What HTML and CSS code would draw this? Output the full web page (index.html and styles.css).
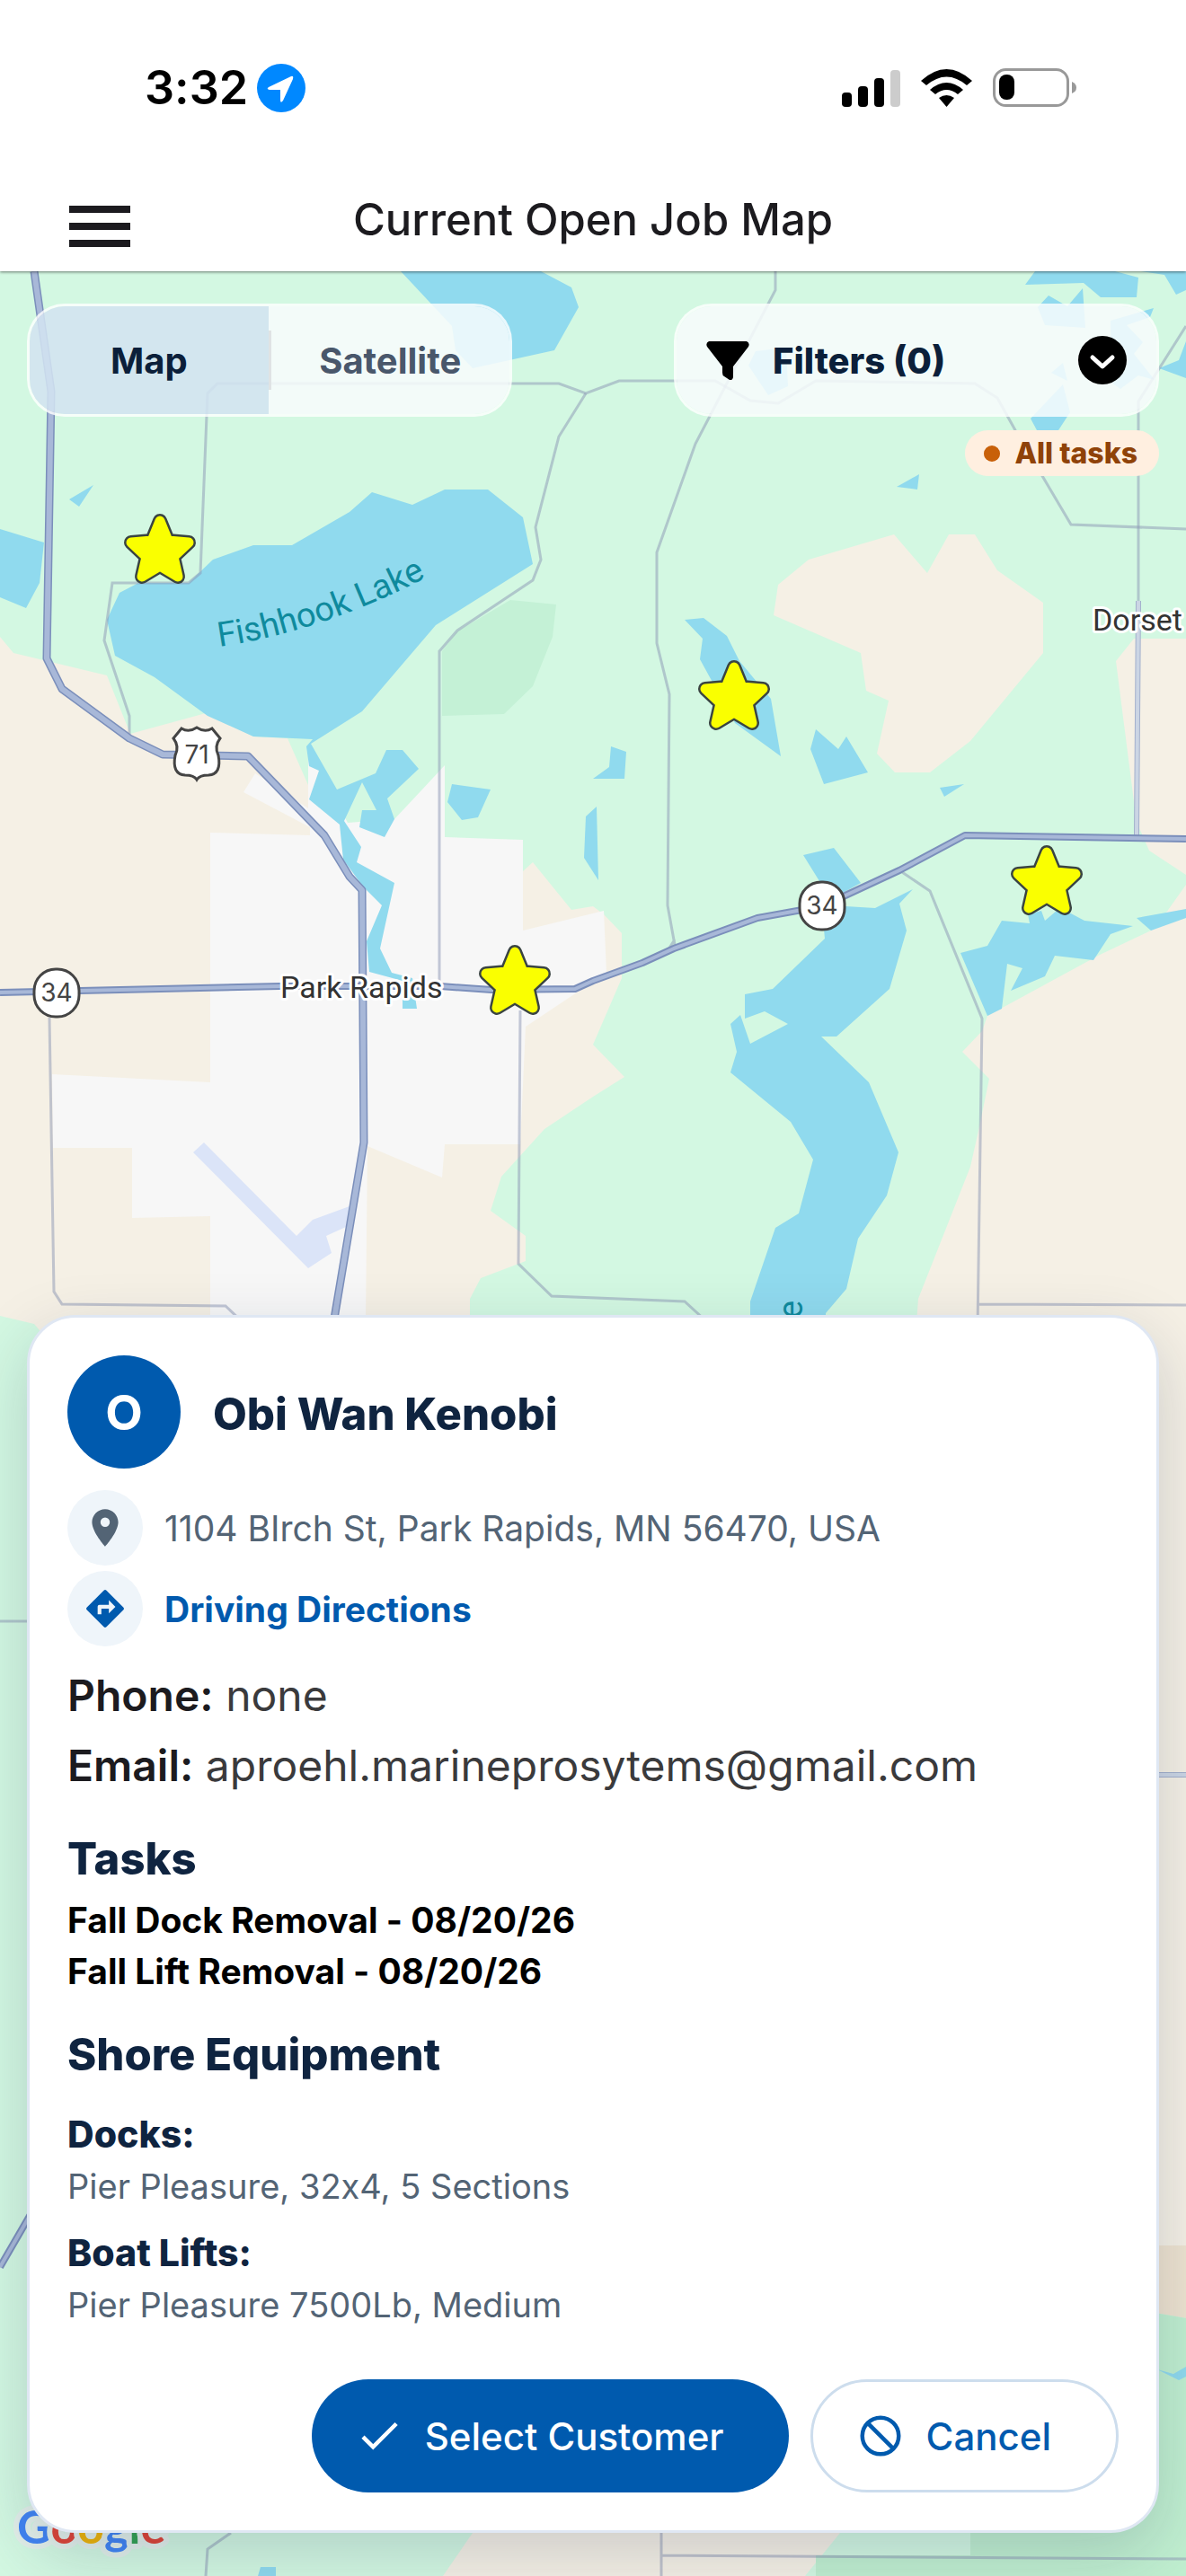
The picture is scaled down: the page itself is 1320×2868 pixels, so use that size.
FILE: index.html
```html
<!DOCTYPE html>
<html lang="en">
<head>
  <meta charset="UTF-8" />
  <meta name="viewport" content="width=device-width, initial-scale=1.0"/>
  <title>Current Open Job Map</title>
  <link rel="stylesheet" href="styles.css">
</head>
<body>
  <header class="top">
    <div class="status-bar">
      <div class="clock">
        <span>3:32</span>
        <svg width="54" height="54" viewBox="0 0 54 54" aria-hidden="true">
          <circle cx="27" cy="27" r="27" fill="#0088ff"/>
          <path d="M38 14 Q41 13 40 17 L29 41 Q26 45 26 40 V29 H14 Q10 28 13 26 Z" fill="#fff"/>
        </svg>
      </div>
      <div class="indicators">
        <svg width="65" height="42" viewBox="0 0 65 42" aria-hidden="true">
          <rect x="0" y="26" width="11" height="16" rx="4"/>
          <rect x="18" y="19" width="11" height="23" rx="4"/>
          <rect x="36" y="10" width="11" height="32" rx="4"/>
          <rect x="54" y="1" width="11" height="41" rx="4" fill="#ccc"/>
        </svg>
        <svg width="57" height="42" viewBox="0 0 57 42" aria-hidden="true">
          <path d="M0 13 Q28.500 -13 57 13 L51 18 Q28.500 -1 6 18 Z"/>
          <path d="M10 23 Q28.500 7 47 23 L41 28 Q28.500 18 16 28 Z"/>
          <path d="M20 32 Q28.500 26 37 32 L28.500 42 Z"/>
        </svg>
        <svg width="93" height="43" viewBox="0 0 93 43" aria-hidden="true">
          <rect x="1.500" y="1.500" width="82" height="40" rx="13" fill="none" stroke="#999" stroke-width="3"/>
          <rect x="7" y="7" width="17" height="28" rx="8"/>
          <path d="M88 15 Q93 17 93 21.500 Q93 26 88 28 Z" fill="#999"/>
        </svg>
      </div>
    </div>
    <nav class="nav">
      <button class="menu-btn" aria-label="Open menu">
        <svg width="68" height="46" viewBox="0 0 68 46"><path d="M0 4H68M0 23H68M0 42H68" stroke="#1c1b1f" stroke-width="8"/></svg>
      </button>
      <h1>Current Open Job Map</h1>
    </nav>
  </header>

  <main class="map">
    <svg class="map-canvas" viewBox="0 302 1320 2566" preserveAspectRatio="xMidYMid slice" aria-hidden="true">
      <defs>
        <g id="star">
          <path d="M0 8 L9 30 L32 32 L15 48 L20 70 L0 58 L-20 70 L-15 48 L-32 32 L-9 30 Z" fill="#3a4442" stroke="#3a4442" stroke-width="16" stroke-linejoin="round"/>
          <path d="M0 8 L9 30 L32 32 L15 48 L20 70 L0 58 L-20 70 L-15 48 L-32 32 L-9 30 Z" fill="#faff00" stroke="#faff00" stroke-width="11" stroke-linejoin="round"/>
        </g>
        <path id="lakeLine" d="M244 720 Q358 704 482 639"/>
      </defs>
      <rect y="302" width="1320" height="2566" fill="#d3f8e2"/>

      <!-- open land -->
      <g fill="#f5f0e5">
        <path d="M0 709 15 727 119 752 145 817 229 794 282 820 320 822 343 874 400 960 582 970 593 960 636 1013 660 1009 672 1018 692 1039 692 1089 660 1163 695 1199 660 1221 606 1257 558 1310 546 1348 585 1376 585 1404 535 1423 523 1446 523 1500 60 1500 38 1474 0 1465Z"/>
        <path d="M861 685 866 651 900 623 995 595 1032 638 1056 595 1085 595 1110 635 1161 671 1161 727 1080 825 1035 860 996 860 976 839 989 780 964 769 958 727Z"/>
        <path d="M1262 711H1320V974L1279 947 1268 922 1263 900 1242 736Z"/>
        <path d="M1320 985 1298 1016 1281 1036 1224 1063 1099 1131 1093 1148 1071 1171 1101 1201 1089 1259 1080 1299 1022 1446 1018 1500H1200V2500H1320Z"/>
        <path d="M526 2820H935L896 2868H493Z"/>
      </g>
      <path d="M1200 2500H1320V2581L1200 2560Z" fill="#eee3d0"/>
      <path d="M1200 2560 1320 2581V2868H908V2845H1080V2700H1200Z" fill="#c0efd0"/>
      <path d="M492 725 509 703 568 668 619 673 615 709 593 764 561 795 492 797Z" fill="#c4f1d6"/>
      <path d="M293 1464 297 1455 304 1464Z" fill="#d3f8e2"/>

      <!-- town -->
      <path d="M234 927 345 930 345 921 271 882 284 861 343 900V836L387 916 439 912 469 880 495 852V932L582 935V1036L672 1014 675 1083 585 1143 579 1274H495L492 1311 409 1276 407 1470H234V1354L147 1356V1278H59L58 1196 234 1205Z" fill="#f7f7f7"/>
      <path d="M227 1272 330 1376 348 1358 389 1343 385 1366 363 1376 369 1395 343 1412 215 1283Z" fill="#dbe4f8"/>

      <!-- water -->
      <g fill="#90daee">
        <path d="M119 690 133 660 154 649H210L237 623 282 607H325L389 570 414 548 459 562 495 545H543L582 576 593 628 485 696 403 792 346 828 375 879 418 861 430 835H448L466 856 431 889 439 912 428 932 400 921 403 902H419L403 871 383 914 402 943 397 960 439 983 423 1056 436 1083 459 1089 464 1123H448V1092L411 1082 408 1048 425 1008 404 987 382 957 378 918 344 890 355 858 344 853 341 831 348 823 282 820 231 797 172 754 128 730Z"/>
        <path d="M446 302 503 363 507 390 526 410 617 390 644 342 636 320 602 302Z"/>
        <path d="M0 589 49 604 44 649 29 677 0 665Z"/>
        <path d="M77 556 104 540 88 564Z"/>
        <path d="M503 873 546 879 532 910 514 913 498 893Z"/>
        <path d="M680 831 697 837 695 867H660L678 854Z"/>
        <path d="M652 909 664 898 666 980 650 955Z"/>
        <path d="M762 690 783 688 809 708 823 736 858 778 869 842 818 805 779 734 782 711Z"/>
        <path d="M908 812 933 834 942 820 966 860 917 873 902 834Z"/>
        <path d="M1046 877 1073 873 1051 887Z"/>
        <path d="M998 542 1023 528 1021 545Z"/>
        <path d="M1152 302 1141 317 1206 315 1225 331H1265L1267 309 1241 302Z"/>
        <path d="M1270 302 1296 306 1309 328 1320 323V302Z"/>
        <path d="M1167 329 1188 341 1205 321 1208 365 1163 362 1155 342Z"/>
        <path d="M1236 357 1284 343 1280 353 1254 362 1272 381 1262 394 1285 423 1267 418 1247 433 1237 426Z"/>
        <path d="M1290 410 1312 401 1320 380V421Z"/>
        <path d="M1183 428 1191 459 1178 479H1154L1147 466Z"/>
        <path d="M1183 404 1188 424 1170 415Z"/>
        <path d="M841 391 875 387 877 430 855 440 833 407Z"/>
        <path d="M1069 1061 1099 1053 1115 1025 1146 1028 1144 1018 1159 1014 1163 1025 1176 1014 1190 1016 1207 1025 1261 1031 1236 1040 1217 1069 1174 1064 1163 1087 1125 1103 1138 1078 1121 1073 1115 1123 1099 1131Z"/>
        <path d="M1265 1022 1320 1012V1022L1281 1036Z"/>
        <path d="M894 952 928 944 958 983 938 994 941 1009 974 1011 1016 990 1001 1006 1009 1036 990 1101 931 1154H914L967 1205 1000 1283 987 1331 955 1379 942 1435 919 1462V1480H835V1449L863 1367 889 1351 905 1291 880 1249 813 1194 820 1171 813 1140 824 1130 835 1162 877 1140 851 1126 829 1134V1107L860 1101 918 1045 912 981Z"/>
        <path d="M1288 2638 1306 2643 1320 2635V2646L1312 2650Z"/>
        <path d="M290 2858H307V2868H287Z"/>
      </g>

      <!-- local roads -->
      <g class="road-local">
        <path d="M144 817V797L116 713 125 649H210L223 638 231 438 242 427H622L652 438 689 424H796L835 446 866 449 908 424 1085 427 1110 443 1130 479 1192 584 1320 589"/>
        <path d="M652 438 622 486 596 587 602 623 593 646 509 702 489 725V1098"/>
        <path d="M863 302V323L774 494 731 615V716L745 773 743 1008 751 1052M751 1046 742 1060"/>
        <path d="M1320 363 1267 447V669"/>
        <path d="M1001 969 1035 992 1093 1134 1088 1480M1088 1452 1320 1453"/>
        <path d="M55 1133 60 1438 69 1452 251 1454 270 1472"/>
        <path d="M579 1125 577 1407 614 1443 762 1449 785 1470"/>
        <path d="M0 1805H40M257 2820 231 2838 229 2868M736 2810V2868M736 2845 1320 2849"/>
      </g>

      <!-- highways -->
      <path class="road-edge minor" d="M1267 669 1265 930M1280 1976H1320"/>
      <path class="road-fill minor" d="M1267 669 1265 930M1280 1976H1320"/>
      <path class="road-edge state" d="M0 1105 311 1098H490L547 1102 640 1101 660 1092 715 1072 750 1056 843 1022 915 1009 1001 969 1074 930 1320 934M0 2524 40 2455"/>
      <path class="road-fill state" d="M0 1105 311 1098H490L547 1102 640 1101 660 1092 715 1072 750 1056 843 1022 915 1009 1001 969 1074 930 1320 934M0 2524 40 2455"/>
      <path class="road-edge" d="M38 302 57 436 52 733 69 767 144 822 181 840 276 842 361 930 389 976 403 991 405 1272 370 1480"/>
      <path class="road-fill" d="M38 302 57 436 52 733 69 767 144 822 181 840 276 842 361 930 389 976 403 991 405 1272 370 1480"/>

      <!-- route shields -->
      <g class="shield">
        <path d="M202 811 Q210 816 219 810 Q228 816 236 811 L245 822 Q238 831 243 841 Q247 862 232 863 Q222 863 219 868 Q216 863 206 863 Q191 862 195 841 Q200 831 193 822 Z"/>
        <text x="219" y="850">71</text>
        <rect x="38" y="1079" width="50" height="53" rx="24"/>
        <text x="63" y="1115">34</text>
        <rect x="890" y="982" width="50" height="53" rx="24"/>
        <text x="915" y="1018">34</text>
      </g>

      <text class="place" x="312" y="1111">Park Rapids</text>
      <text class="place" x="1216" y="702">Dorset</text>
      <text class="lake"><textPath href="#lakeLine">Fishhook Lake</textPath></text>
      <text class="lake" transform="translate(893 1468) rotate(-90)">e</text>

      <use href="#star" x="178" y="572"/>
      <use href="#star" x="817" y="735"/>
      <use href="#star" x="573" y="1052"/>
      <use href="#star" x="1165" y="941"/>

      <text class="google" x="19" y="2832"><tspan fill="#4285f4">G</tspan><tspan fill="#e04438">o</tspan><tspan fill="#f0b50a">o</tspan><tspan fill="#4285f4">g</tspan><tspan fill="#34a353">l</tspan><tspan fill="#e04438">e</tspan></text>
    </svg>

    <div class="controls">
      <div class="glass toggle">
        <button class="active">Map</button>
        <button>Satellite</button>
      </div>
      <button class="glass filters">
        <svg width="48" height="43" viewBox="0 0 48 43" aria-hidden="true"><path d="M3 0H45Q49 2 47 6L30 28V40Q29 44 26 43L20 39Q18 38 18 35V28L1 6Q-1 2 3 0Z"/></svg>
        <span>Filters (0)</span>
        <svg width="54" height="54" viewBox="0 0 54 54" aria-hidden="true"><circle cx="27" cy="27" r="27"/><path d="M16 24L27 34L38 24" fill="none" stroke="#fff" stroke-width="5" stroke-linecap="round" stroke-linejoin="round"/></svg>
      </button>
      <div class="chip">All tasks</div>
    </div>

    <section class="card">
      <div class="customer">
        <div class="avatar">O</div>
        <h2>Obi Wan Kenobi</h2>
      </div>

      <div class="location">
        <div class="row">
          <span class="bubble">
            <svg width="50" height="50" viewBox="0 0 24 24" aria-hidden="true"><path fill="#536475" d="M12 2C8.130 2 5 5.130 5 9c0 5.250 7 13 7 13s7-7.750 7-13c0-3.870-3.130-7-7-7zm0 9.500a2.500 2.500 0 1 1 0-5 2.500 2.500 0 0 1 0 5z"/></svg>
          </span>
          <span>1104 BIrch St, Park Rapids, MN 56470, USA</span>
        </div>
        <div class="row">
          <span class="bubble">
            <svg width="50" height="50" viewBox="0 0 24 24" aria-hidden="true"><path fill="#005aae" d="M21.710 11.290l-9-9a1 1 0 0 0-1.420 0l-9 9a1 1 0 0 0 0 1.420l9 9a1 1 0 0 0 1.420 0l9-9a1 1 0 0 0 0-1.420zM14 14.500V12h-4v3H8v-4c0-.550.450-1 1-1h5V7.500l3.500 3.500-3.500 3.500z"/></svg>
          </span>
          <a href="#directions">Driving Directions</a>
        </div>
      </div>

      <div class="contact">
        <p><strong>Phone:</strong> none</p>
        <p><strong>Email:</strong> aproehl.marineprosytems@gmail.com</p>
      </div>

      <h3>Tasks</h3>
      <ul class="tasks">
        <li>Fall Dock Removal - 08/20/26</li>
        <li>Fall Lift Removal - 08/20/26</li>
      </ul>

      <h3>Shore Equipment</h3>
      <div class="equipment">
        <div>
          <h4>Docks:</h4>
          <p>Pier Pleasure, 32x4, 5 Sections</p>
        </div>
        <div>
          <h4>Boat Lifts:</h4>
          <p>Pier Pleasure 7500Lb, Medium</p>
        </div>
      </div>

      <div class="actions">
        <button class="btn primary">
          <svg width="54" height="54" viewBox="0 0 24 24" aria-hidden="true"><path d="M4 12.500L9 17.500L20.500 6" fill="none" stroke="#fff" stroke-width="2"/></svg>
          Select Customer
        </button>
        <button class="btn outline">
          <svg width="54" height="54" viewBox="0 0 24 24" aria-hidden="true"><path d="M5.600 5.600L18.400 18.400M12 3a9 9 0 1 0 0 18a9 9 0 1 0 0-18" fill="none" stroke="#005aae" stroke-width="2"/></svg>
          Cancel
        </button>
      </div>
    </section>
  </main>
</body>
</html>
```
FILE: styles.css
```css
* {
  box-sizing: border-box;
}
body {
  margin: 0;
  min-height: 100vh;
  display: flex;
  flex-direction: column;
  font-family: Inter, 'Liberation Sans', sans-serif;
  font-feature-settings: 'calt' 0;
  background: white;
  color: #1c1b1f;
}
h1, h2, h3, h4, p, ul {
  margin: 0;
  padding: 0;
}
svg {
  display: block;
  flex: none;
}
button {
  font-family: inherit;
  border: none;
  background: none;
  padding: 0;
  cursor: pointer;
}

/* header */
.top {
  position: relative;
  z-index: 1;
  background: white;
  box-shadow: 0 1px 3px rgba(0, 0, 0, 0.5);
}
.status-bar {
  display: flex;
  justify-content: space-between;
  align-items: center;
  height: 195px;
  padding: 0 122px 0 161px;
}
.clock {
  display: flex;
  align-items: center;
  gap: 10px;
  font-size: 52px;
  font-weight: 600;
  color: black;
}
.indicators {
  display: flex;
  align-items: center;
  gap: 23px;
}
.nav {
  display: grid;
  grid-template-columns: 68px 1fr 68px;
  align-items: end;
  padding: 20px 77px 27px;
}
.nav h1 {
  font-size: 49px;
  line-height: 60px;
  font-weight: 500;
  text-align: center;
}

/* map */
.map {
  flex: 1;
  position: relative;
  display: flex;
  flex-direction: column;
  justify-content: space-between;
  gap: 40px;
  padding: 36px 30px 48px;
  overflow: hidden;
}
.map-canvas {
  position: absolute;
  inset: 0;
  width: 100%;
  height: 100%;
}
.road-local {
  fill: none;
  stroke: #8c96b4;
  stroke-opacity: 0.5;
  stroke-width: 3;
}
.road-edge, .road-fill {
  fill: none;
  stroke-linejoin: round;
}
.road-edge {
  stroke: #7b8fbb;
  stroke-width: 9;
}
.road-fill {
  stroke: #a8b8d8;
  stroke-width: 6;
}
.road-edge.state {
  stroke-width: 8;
}
.road-fill.state {
  stroke-width: 4;
}
.road-edge.minor {
  stroke: #a3b0cc;
  stroke-width: 6;
}
.road-fill.minor {
  stroke: #cbd5e4;
  stroke-width: 4;
}
.shield path, .shield rect {
  fill: white;
  stroke: #444;
  stroke-width: 3;
}
.shield text {
  font-size: 28px;
  fill: #444;
  text-anchor: middle;
}
.place {
  font-family: Roboto, sans-serif;
  font-size: 34px;
  fill: #333;
  stroke: white;
  stroke-width: 6;
  stroke-linejoin: round;
  paint-order: stroke;
}
.lake {
  font-family: Roboto, sans-serif;
  font-size: 38px;
  fill: #0f8a9d;
}
.google {
  font-family: Lato, sans-serif;
  font-size: 52px;
  font-weight: 700;
  stroke: #e3f0ea;
  stroke-width: 12;
  stroke-linejoin: round;
  paint-order: stroke;
}

.controls {
  position: relative;
  display: grid;
  grid-template-columns: 1fr 1fr;
  column-gap: 180px;
  row-gap: 15px;
}
.glass {
  height: 126px;
  border: 3px solid rgba(255, 255, 255, 0.8);
  border-radius: 42px;
  background: rgba(248, 251, 253, 0.85);
  background-clip: padding-box;
  overflow: hidden;
  font-size: 40px;
  font-weight: 800;
  color: #0b1f3a;
}
.toggle {
  display: flex;
  align-items: center;
}
.toggle button {
  flex: 1;
  height: 66px;
  border-left: 3px solid #dfe3e4;
  font-size: 40px;
  font-weight: 700;
  color: #49576b;
}
.toggle button.active {
  height: 100%;
  border: none;
  color: #0b1f3a;
  background: rgba(0, 90, 174, 0.13);
}
.filters {
  display: flex;
  align-items: center;
  gap: 26px;
  padding: 0 33px;
}
.filters span {
  flex: 1;
  text-align: left;
}
.chip {
  grid-column: 2;
  justify-self: end;
  display: flex;
  align-items: center;
  gap: 16px;
  height: 51px;
  padding: 0 24px 0 21px;
  border-radius: 26px;
  background: #ffefe0;
  color: #8f4208;
  font-size: 32px;
  font-weight: 800;
}
.chip::before {
  content: '';
  width: 18px;
  height: 18px;
  border-radius: 50%;
  background: #c86009;
}

/* customer card */
.card {
  position: relative;
  padding: 42px;
  border: 3px solid #dfe7f3;
  border-radius: 54px;
  background: white;
  box-shadow: 0 24px 72px rgba(15, 35, 65, 0.18);
  color: #0f2440;
}
.customer {
  display: flex;
  align-items: center;
  gap: 36px;
}
.avatar {
  display: flex;
  align-items: center;
  justify-content: center;
  width: 126px;
  height: 126px;
  border-radius: 50%;
  background: #005aae;
  color: white;
  font-size: 54px;
  font-weight: 700;
}
.card h2, .card h3 {
  font-size: 49px;
  line-height: 58px;
  font-weight: 800;
}
.card h2 {
  padding-top: 6px;
}
.location {
  display: grid;
  gap: 6px;
  margin-top: 24px;
}
.row {
  display: flex;
  align-items: center;
  gap: 24px;
  font-size: 39px;
  color: #536475;
}
.row a {
  font-weight: 700;
  color: #005aae;
  text-decoration: none;
}
.bubble {
  display: flex;
  align-items: center;
  justify-content: center;
  width: 84px;
  height: 84px;
  border-radius: 50%;
  background: #eff5fa;
}
.contact {
  margin-top: 16px;
  font-size: 48px;
  line-height: 78px;
  color: #3a3a3c;
}
.contact strong {
  font-weight: 600;
  color: #1c1b1f;
}
.card h3 {
  margin-top: 36px;
}
.tasks {
  margin-top: 10px;
  list-style: none;
  font-size: 39px;
  line-height: 57px;
  font-weight: 700;
  color: black;
}
.equipment {
  display: grid;
  gap: 16px;
  margin-top: 30px;
  font-size: 38px;
  line-height: 58px;
  color: #536475;
}
.equipment h4 {
  font-size: 41px;
  font-weight: 800;
  color: #0f2440;
}
.actions {
  display: flex;
  justify-content: flex-end;
  gap: 24px;
  margin-top: 54px;
}
.btn {
  display: flex;
  align-items: center;
  gap: 24px;
  height: 126px;
  padding: 0 72px 0 48px;
  border-radius: 63px;
  font-size: 42px;
  font-weight: 500;
}
.primary {
  background: #005aae;
  color: white;
}
.outline {
  border: 3px solid #cddded;
  color: #005aae;
}
```
